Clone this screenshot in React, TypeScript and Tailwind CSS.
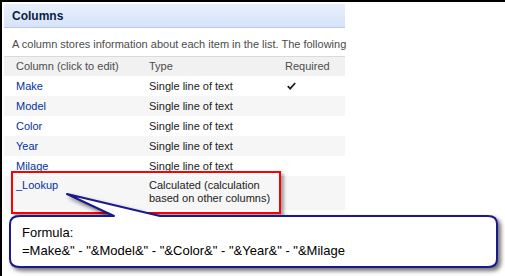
import React from "react";

// SharePoint-style list columns panel with annotation overlays
const rows = [
  { name: "Make", type: "Single line of text", required: true },
  { name: "Model", type: "Single line of text" },
  { name: "Color", type: "Single line of text" },
  { name: "Year", type: "Single line of text" },
  { name: "Milage", type: "Single line of text" },
];

const Check = () => (
  <svg width="9" height="8" viewBox="0 0 9 8" className="text-[#222]">
    <path d="M0.8 4.2 L3.2 6.6 L8.2 1" fill="none" stroke="currentColor" strokeWidth="1.8" />
  </svg>
);

export default function App() {
  return (
    <div className="relative w-[505px] h-[276px] overflow-hidden bg-white border-t-2 border-l-2 border-black font-['Liberation_Sans',Arial,sans-serif]">
      <div className="w-[341px] ml-[2px] mt-[2px]">
        {/* Header */}
        <div className="h-[24px] flex items-center pl-[8px] bg-gradient-to-b from-[#e9f0fc] to-[#d6e3f9] border-b border-[#b9cbe9] text-[12px] font-bold text-[#0a1f44]">
          Columns
        </div>

        {/* Description */}
        <div className="h-[28px] pt-[4px] flex items-center pl-[8px] text-[11px] text-[#4c4c4c] whitespace-nowrap">
          A column stores information about each item in the list. The following
        </div>

        {/* Table */}
        <div className="text-[11px]">
          <div className="grid grid-cols-[145px_136px_1fr] h-[20px] items-center bg-[#f1f1f1] border-t border-[#dadada] text-[#4c4c4c]">
            <div className="pl-[12px]">Column (click to edit)</div>
            <div>Type</div>
            <div>Required</div>
          </div>
          {rows.map((r, i) => (
            <div
              key={r.name}
              className={`grid grid-cols-[145px_136px_1fr] h-[20px] items-center ${i % 2 === 1 ? "bg-[#f6f6f6]" : "bg-white"}`}
            >
              <div className="pl-[12px] text-[#0033a0]">{r.name}</div>
              <div className="text-[#222]">{r.type}</div>
              <div className="pl-[2px]">{r.required && <Check />}</div>
            </div>
          ))}
          <div className="grid grid-cols-[145px_136px_1fr] h-[34px] pt-[3px] bg-[#f6f6f6] leading-[13px]">
            <div className="pl-[12px] text-[#0033a0]">_Lookup</div>
            <div className="text-[#222]">
              Calculated (calculation
              <br />
              based on other columns)
            </div>
            <div />
          </div>
        </div>
      </div>

      {/* Red highlight box */}
      <div className="absolute left-[9px] top-[169px] w-[270px] h-[43px] border-2 border-[#ff0000] shadow-[3px_3px_3px_rgba(0,0,0,0.35)]" />

      {/* Callout */}
      <svg
        className="absolute left-0 top-0 drop-shadow-[3px_3px_2px_rgba(0,0,0,0.55)]"
        width="505"
        height="276"
        viewBox="0 0 505 276"
      >
        <path
          d="M18 214 L112 214 L65 192 L158 214 L486 214 Q495 214 495 222 L495 257 Q495 265 486 265 L18 265 Q8 265 8 257 L8 222 Q8 214 18 214 Z"
          fill="#ffffff"
          stroke="#1a1a8e"
          strokeWidth="2"
          strokeLinejoin="round"
        />
      </svg>
      <div className="absolute left-[20px] top-[222px] text-[13px] leading-[18px] text-black whitespace-nowrap">
        <div>Formula:</div>
        <div>=Make&amp;" - "&amp;Model&amp;" - "&amp;Color&amp;" - "&amp;Year&amp;" - "&amp;Milage</div>
      </div>
    </div>
  );
}
